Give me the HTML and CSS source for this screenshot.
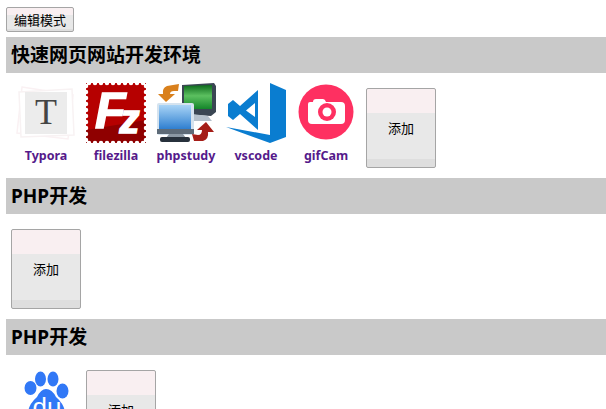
FILE: index.html
```html
<!DOCTYPE html>
<html lang="zh-CN">
<head>
    <meta charset="UTF-8">
    <meta name="viewport" content="width=device-width, initial-scale=1.0">
    <title>快速网页网站开发环境</title>
    <link rel="stylesheet" href="styles.css">
</head>
<body>
    <button class="mode-btn">编辑模式</button>

    <h2 class="group-title">快速网页网站开发环境</h2>
    <div class="app-list">
        <a class="app" href="#">
            <svg class="app-icon" viewBox="0 0 60 60">
                <polygon points="6,4 57,12 52,56 1,50" fill="#fff" stroke="#faf1f3" stroke-width="1.5"/>
                <polygon points="3,9 56,6 58,52 5,54" fill="#fff" stroke="#f8f2f3" stroke-width="1.5"/>
                <rect x="9" y="9" width="42" height="42" fill="#ececec"/>
                <text x="30" y="41" text-anchor="middle" class="typora-t">T</text>
            </svg>
            <span class="app-name">Typora</span>
        </a>
        <a class="app" href="#">
            <svg class="app-icon" viewBox="0 0 60 60">
                <rect width="60" height="60" fill="#b60000"/>
                <polygon points="0,60 0,47 60,37 60,60" fill="#8f0000"/>
                <rect width="60" height="60" fill="none" stroke="#fff" stroke-width="4.5" stroke-linecap="round" stroke-dasharray="0 6" stroke-dashoffset="3"/>
                <text x="9" y="45" class="filezilla-logo">F<tspan class="filezilla-z" dx="-6" dy="5">z</tspan></text>
            </svg>
            <span class="app-name">filezilla</span>
        </a>
        <a class="app" href="#">
            <svg class="app-icon" viewBox="0 0 60 60">
                <defs>
                    <linearGradient id="greenScreen" x1="0" y1="0" x2="0" y2="1">
                        <stop offset="0" stop-color="#0d6b1c"/>
                        <stop offset="0.45" stop-color="#5cc060"/>
                        <stop offset="1" stop-color="#14862a"/>
                    </linearGradient>
                    <linearGradient id="blueScreen" x1="0" y1="0" x2="0" y2="1">
                        <stop offset="0" stop-color="#a9d4f6"/>
                        <stop offset="1" stop-color="#2f7fd0"/>
                    </linearGradient>
                </defs>
                <polygon points="26,2 58,0 60,3 60,29 55,33 26,31" fill="#3a4653"/>
                <polygon points="28,3 56,2 56,26 28,26" fill="url(#greenScreen)"/>
                <polygon points="36,31 52,33 56,38 36,38" fill="#b4c0cb"/>
                <path d="M23 1 L11 3 Q6 5 7 11 L2 11 L10 19 L19 11 L14 11 Q14 8 18 8 L22 8 Z" fill="#d9801c"/>
                <rect x="1" y="20" width="37" height="32" rx="2" fill="#d5e3ef"/>
                <rect x="3" y="22" width="32" height="24" fill="url(#blueScreen)"/>
                <rect x="1" y="46" width="37" height="5" fill="#5e6b78"/>
                <polygon points="13,51 27,51 30,55 10,55" fill="#8b98a4"/>
                <rect x="4" y="54" width="30" height="5" rx="2" fill="#27313c"/>
                <path d="M38 58 L47 58 Q53 56 52 49 L58 49 L50 39 L41 47 L46 47 Q46 52 42 52 L36 51 Z" fill="#a51d17"/>
            </svg>
            <span class="app-name">phpstudy</span>
        </a>
        <a class="app" href="#">
            <svg class="app-icon" viewBox="0 0 60 60">
                <path d="M44 0 L60 7 V54 L44 60 L0 44 L44 52 Z" fill="#0a7dd0"/>
                <path fill-rule="evenodd" d="M32 7 L14 23 L7 17 L2 21 V33 L7 37 L14 31 L32 47 Z M20 27.5 L29 20 V34 Z" fill="#0a7dd0"/>
            </svg>
            <span class="app-name">vscode</span>
        </a>
        <a class="app" href="#">
            <svg class="app-icon" viewBox="0 0 60 60">
                <circle cx="30" cy="29" r="27.5" fill="#fe3061"/>
                <path d="M14 19 H17 Q17 16 20 16 H27 Q29 16 30 19 H45 Q49 19 49 23 V37 Q49 41 45 41 H16 Q12 41 12 37 V21 Q12 19 14 19 Z" fill="#fff"/>
                <circle cx="31" cy="29" r="9" fill="#fe3061"/>
                <circle cx="31" cy="29" r="4.5" fill="#fff"/>
            </svg>
            <span class="app-name">gifCam</span>
        </a>
        <button class="add-btn">添加</button>
    </div>

    <h2 class="group-title">PHP开发</h2>
    <div class="app-list">
        <button class="add-btn">添加</button>
    </div>

    <h2 class="group-title">PHP开发</h2>
    <div class="app-list">
        <a class="app" href="#">
            <svg class="app-icon" viewBox="0 0 60 60">
                <ellipse cx="14.5" cy="23" rx="6" ry="7" fill="#3178f6"/>
                <ellipse cx="24.5" cy="14" rx="5.5" ry="7.5" fill="#3178f6"/>
                <ellipse cx="37" cy="14" rx="5.5" ry="7.5" fill="#3178f6"/>
                <ellipse cx="46.5" cy="26" rx="6" ry="7.5" fill="#3178f6"/>
                <path d="M30 24 Q36 24 40 32 Q47 38 49 46 Q50 58 38 58 Q30 56 22 58 Q10 58 12 46 Q14 38 21 32 Q25 24 30 24 Z" fill="#3178f6"/>
                <text x="31" y="51" text-anchor="middle" class="baidu-du">du</text>
            </svg>
        </a>
        <button class="add-btn">添加</button>
    </div>
</body>
</html>
```

FILE: styles.css
```css
html { overflow: hidden; }
body { font-family: "Noto Sans", "Noto Sans CJK SC", sans-serif; background: #fff; color: #000; margin: 0; padding: 7px 0 0 6px; }
button { font-family: "Noto Sans CJK SC", sans-serif; font-size: 13px; color: #000; border: 1px solid #a5a5a5; border-radius: 2px; padding: 0; cursor: pointer; background: linear-gradient(#f9eff1 0, #f9eff1 31%, #e8e8e8 31%, #e8e8e8 90%, #dedede 90%); }
.mode-btn { display: block; width: 68px; height: 25px; margin-bottom: 5px; }
.group-title { font-size: 19px; line-height: 37px; height: 36px; margin: 0; padding-left: 5px; background: #c9c9c9; font-weight: bold; }
.app-list { display: flex; align-items: flex-start; padding: 10px 0 10px 5px; }
.app { display: block; width: 60px; padding: 0 5px; text-decoration: none; text-align: center; }
.app-icon { display: block; width: 60px; height: 60px; }
.app-name { display: block; font-size: 12.5px; font-weight: bold; line-height: 16px; margin-top: 5px; color: #551a8b; white-space: nowrap; }
.add-btn { width: 70px; height: 80px; margin-top: 5px; padding-bottom: 2px; }
.app + .add-btn { margin-left: 5px; }
.typora-t { font-family: "Liberation Serif", serif; font-size: 36px; fill: #444; }
.filezilla-logo { font-family: "Liberation Sans", sans-serif; font-weight: bold; font-style: italic; font-size: 50px; fill: #fff; stroke: #fff; stroke-width: 1.5px; }
.filezilla-z { font-size: 40px; }
.baidu-du { font-family: "Liberation Sans", sans-serif; font-size: 26px; fill: #fff; }
```
